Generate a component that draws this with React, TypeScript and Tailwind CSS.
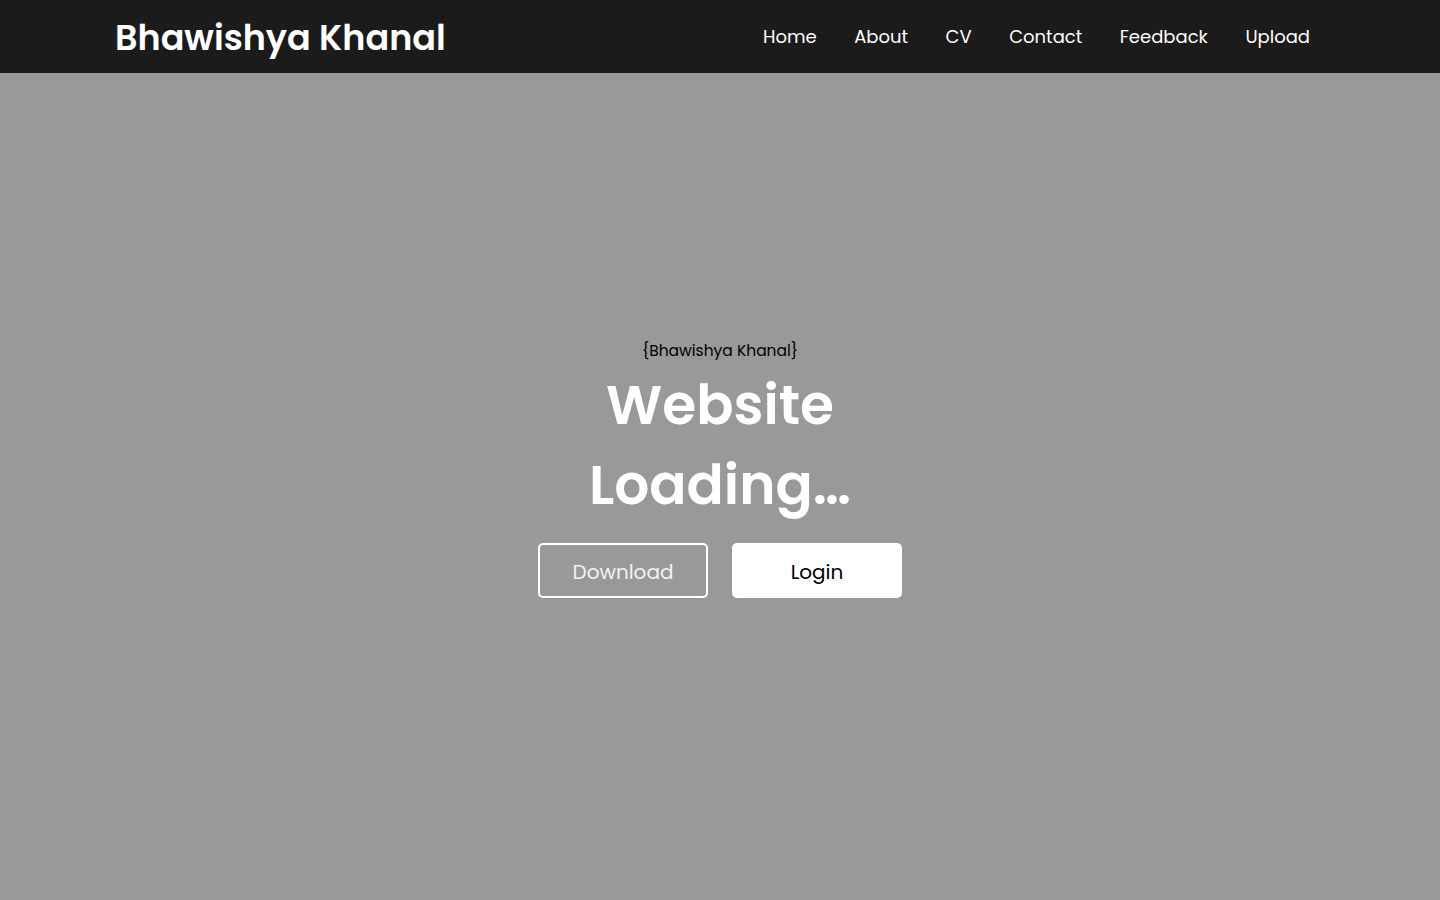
export default function App() {
  const links = ["Home", "About", "CV", "Contact", "Feedback", "Upload"];
  return (
    <div className="min-h-screen flex flex-col bg-[#999999] font-['Poppins','Inter',sans-serif]">
      {/* Top bar */}
      <header className="h-[73px] bg-[#1b1b1b] flex items-center justify-between pl-[115px] pr-[130px]">
        <h1 className="text-[35px] font-semibold text-white leading-[40px] pt-[2px]">Bhawishya Khanal</h1>
        <nav className="flex items-center gap-[37.5px]">
          {links.map((l) => (
            <a key={l} href="#" className="text-[18px] text-white">
              {l}
            </a>
          ))}
        </nav>
      </header>

      {/* Hero */}
      <main className="flex-1 flex flex-col items-center pt-[266px]">
        <p className="text-[15.5px] text-black leading-[24px]">{"{Bhawishya Khanal}"}</p>
        <h2 className="mt-[2px] text-[55px] font-semibold text-white leading-[80px] text-center">
          Website
          <br />
          Loading…
        </h2>
        <div className="mt-[18px] flex gap-[24px]">
          <button className="w-[170px] h-[55px] pt-[2px] rounded-[5px] border-2 border-white text-[#f2f2f2] text-[20px]">
            Download
          </button>
          <button className="w-[170px] h-[55px] pt-[2px] rounded-[5px] bg-white text-black text-[20px]">
            Login
          </button>
        </div>
      </main>
    </div>
  );
}
